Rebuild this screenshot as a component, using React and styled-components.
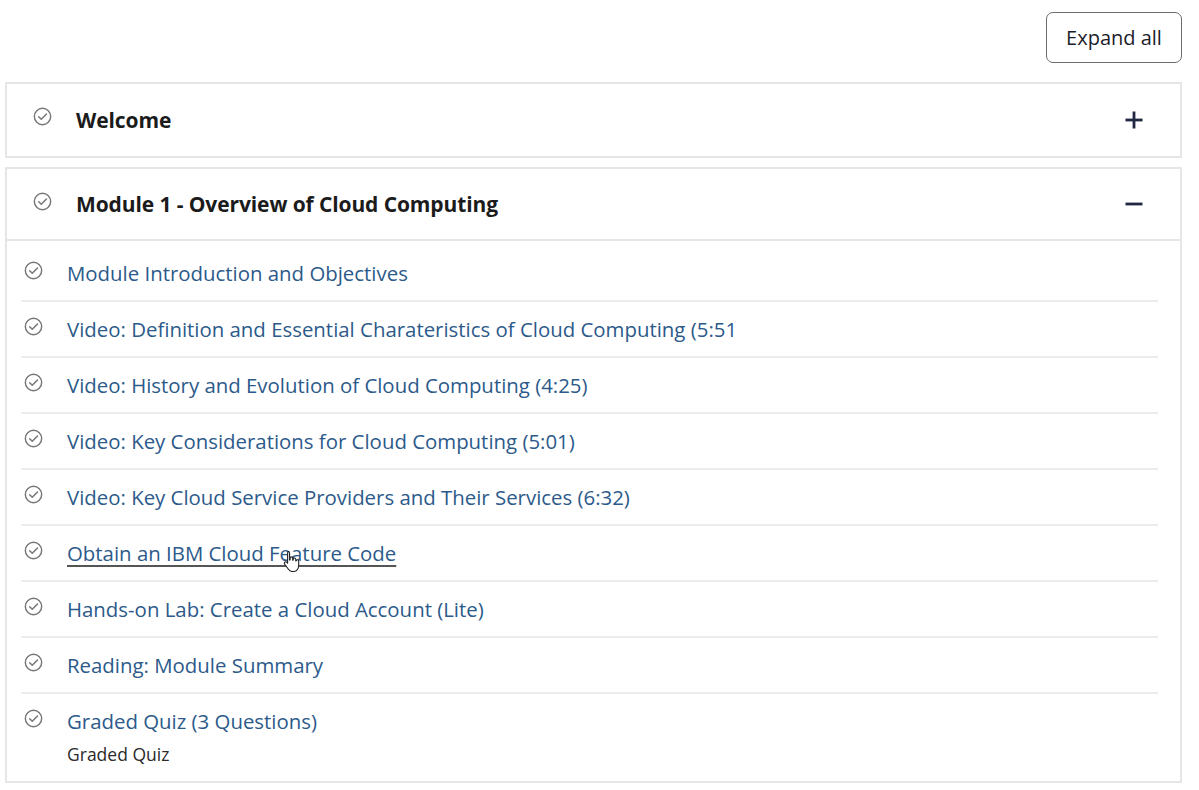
import React from 'react';
import styled, { createGlobalStyle } from 'styled-components';

const GlobalStyle = createGlobalStyle`
  body {
    margin: 0;
    background: #fff;
    font-family: "Open Sans", "Noto Sans", sans-serif;
  }
`;

const items = [
  { title: 'Module Introduction and Objectives' },
  { title: 'Video: Definition and Essential Charateristics of Cloud Computing (5:51' },
  { title: 'Video: History and Evolution of Cloud Computing (4:25)' },
  { title: 'Video: Key Considerations for Cloud Computing (5:01)' },
  { title: 'Video: Key Cloud Service Providers and Their Services (6:32)' },
  { title: 'Obtain an IBM Cloud Feature Code', hover: true },
  { title: 'Hands-on Lab: Create a Cloud Account (Lite)' },
  { title: 'Reading: Module Summary' },
  { title: 'Graded Quiz (3 Questions)', sub: 'Graded Quiz' },
];

const CheckIcon = () => (
  <svg width="19" height="19" viewBox="0 0 20 20" fill="none">
    <circle cx="10" cy="10" r="8.6" stroke="#777" strokeWidth="1.5" />
    <path d="M6 10.3l2.7 2.6L14.2 7.4" stroke="#777" strokeWidth="1.6" strokeLinecap="round" strokeLinejoin="round" />
  </svg>
);

const HandCursor = () => (
  <svg width="18" height="22" viewBox="0 0 18 22">
    <path
      d="M5 1.5c.9 0 1.5.6 1.5 1.5v7l.6-.1V8.2c0-.8.6-1.3 1.3-1.3s1.3.5 1.3 1.3v2l.5-.1V9.3c0-.8.6-1.3 1.3-1.3s1.3.5 1.3 1.3v1.6l.4-.1c.1-.7.6-1.1 1.2-1.1.7 0 1.3.6 1.3 1.3v4.6c0 3.3-2.3 5.9-5.4 5.9H9.6c-1.8 0-3.2-.9-4.2-2.3L1.6 14c-.5-.7-.3-1.6.4-2 .6-.4 1.4-.3 1.9.3l.7.9V3c0-.9.6-1.5 1.4-1.5z"
      fill="#fff" stroke="#222" strokeWidth="1.1" strokeLinejoin="round"
    />
  </svg>
);

const ToggleIcon = ({ minus }) => (
  <svg width="20" height="20" viewBox="0 0 20 20">
    <path d="M1.5 10h17" stroke="#1f2741" strokeWidth="2.8" />
    {!minus && <path d="M10 1.5v17" stroke="#1f2741" strokeWidth="2.8" />}
  </svg>
);

const Page = styled.div`
  width: 1199px;
  padding: 12px 17px 0 5px;
  box-sizing: border-box;
`;

const Toolbar = styled.div`
  display: flex;
  justify-content: flex-end;
  margin-bottom: 19px;
`;

const ExpandButton = styled.button`
  width: 136px;
  height: 51px;
  border: 1.5px solid #6b6b6b;
  border-radius: 7px;
  background: #fff;
  font-family: "Open Sans", "Noto Sans", sans-serif;
  font-size: 20px;
  color: #1c1c2a;
  padding: 0;
`;

const Panel = styled.section`
  border: 2px solid #e6e6e6;
  margin-bottom: 9px;
  background: #fff;
`;

const Header = styled.div`
  display: flex;
  align-items: center;
  height: 72px;
  padding: 0 36px 0 26px;
  border-bottom: ${p => (p.$open ? '2px solid #e6e6e6' : 'none')};
  box-sizing: border-box;
`;

const IconWrap = styled.span`
  display: flex;
  width: 19px;
  height: 19px;
  margin-top: ${p => p.$mt || 0}px;
  margin-left: ${p => p.$ml || 0}px;
  flex-shrink: 0;
`;

const Title = styled.h3`
  flex: 1;
  margin: 0 0 0 24px;
  font-size: 21px;
  font-weight: 700;
  color: #1b1b1b;
  letter-spacing: -0.1px;
`;

const List = styled.ul`
  list-style: none;
  margin: 0;
  padding: 5px 22px 0 14px;
`;

const Row = styled.li`
  display: flex;
  align-items: flex-start;
  padding: ${p => (p.$last ? '13px 0 15px' : '13px 0 0')};
  height: ${p => (p.$last ? 'auto' : '41px')};
  border-bottom: ${p => (p.$last ? 'none' : '2px solid #ececec')};
`;

const Body = styled.div`
  margin-left: 24px;
  display: flex;
  flex-direction: column;
`;

const LinkText = styled.a`
  position: relative;
  font-size: 20.4px;
  line-height: 28px;
  color: #2c5a8a;
  text-decoration: ${p => (p.$hover ? 'underline' : 'none')};
  text-decoration-color: #555;
  text-underline-offset: 4px;
  text-decoration-thickness: 1.5px;
  cursor: pointer;
`;

const Cursor = styled.span`
  position: absolute;
  left: 216px;
  top: 11px;
  display: flex;
`;

const SubText = styled.span`
  margin-top: 7px;
  font-size: 17.5px;
  color: #2a2a2a;
`;

export default function App() {
  return (
    <>
      <GlobalStyle />
      <Page>
        <Toolbar>
          <ExpandButton>Expand all</ExpandButton>
        </Toolbar>
        <Panel>
          <Header>
            <IconWrap $mt={-8}><CheckIcon /></IconWrap>
            <Title>Welcome</Title>
            <ToggleIcon />
          </Header>
        </Panel>
        <Panel>
          <Header $open>
            <IconWrap $mt={-6}><CheckIcon /></IconWrap>
            <Title>Module 1 - Overview of Cloud Computing</Title>
            <ToggleIcon minus />
          </Header>
          <List>
            {items.map((it, i) => (
              <Row key={i} $last={i === items.length - 1}>
                <IconWrap $ml={3} $mt={2}><CheckIcon /></IconWrap>
                <Body>
                  <LinkText $hover={it.hover}>
                    {it.title}
                    {it.hover && <Cursor><HandCursor /></Cursor>}
                  </LinkText>
                  {it.sub && <SubText>{it.sub}</SubText>}
                </Body>
              </Row>
            ))}
          </List>
        </Panel>
      </Page>
    </>
  );
}
